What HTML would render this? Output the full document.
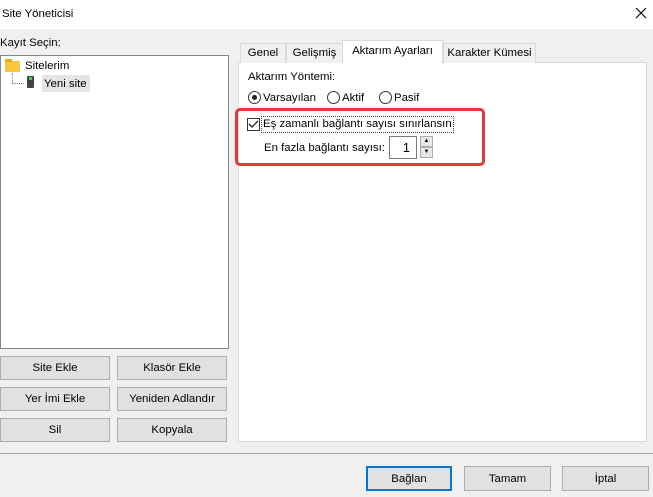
<!DOCTYPE html><html><head><style>
body{margin:0;width:653px;height:497px;background:#f0f0f0;font-family:"Liberation Sans",sans-serif;font-size:11.4px;color:#000;position:relative;overflow:hidden}
.a{position:absolute}
.btn{position:absolute;background:#e1e1e1;border:1px solid #adadad;box-sizing:border-box;text-align:center;font-size:11.4px}
.tab{position:absolute;top:43px;height:20px;border:1px solid #d9d9d9;border-bottom:none;box-sizing:border-box;background:#f0f0f0;line-height:19px;text-align:center}
.rad{position:absolute;top:91px;width:13px;height:13px;border:1px solid #333;border-radius:50%;box-sizing:border-box;background:#fff}
</style></head><body>
<div class="a" style="left:0;top:0;width:653px;height:29px;background:#fff"></div>
<div class="a" style="left:2px;top:8px">Site Yöneticisi</div>
<svg class="a" style="left:635px;top:7px" width="12" height="12"><path d="M1 1L11 11M11 1L1 11" stroke="#000" stroke-width="1.1"/></svg>
<div class="a" style="left:0;top:37px">Kayıt Seçin:</div>
<div class="a" style="left:0;top:55px;width:229px;height:294px;background:#fff;border:1px solid #828790;box-sizing:border-box"></div>
<div class="a" style="left:5px;top:61px;width:15px;height:11px;background:#f8c640;border-radius:1px"></div>
<div class="a" style="left:5px;top:59px;width:7px;height:3px;background:#e8a820"></div>
<div class="a" style="left:25px;top:60px">Sitelerim</div>
<div class="a" style="left:12px;top:73px;height:10px;border-left:1px dotted #888"></div>
<div class="a" style="left:12px;top:83px;width:12px;border-top:1px dotted #888"></div>
<div class="a" style="left:27px;top:76px;width:7px;height:12px;background:#444;border-radius:1px"></div>
<div class="a" style="left:29px;top:77px;width:3px;height:3px;background:#4c4"></div>
<div class="a" style="left:42px;top:75px;width:48px;height:17px;background:#e5e5e5"></div>
<div class="a" style="left:44px;top:78px">Yeni site</div>
<div class="btn" style="left:0;top:356px;width:110px;height:24px;line-height:23px">Site Ekle</div>
<div class="btn" style="left:117px;top:356px;width:110px;height:24px;line-height:23px">Klasör Ekle</div>
<div class="btn" style="left:0;top:387px;width:110px;height:24px;line-height:23px">Yer İmi Ekle</div>
<div class="btn" style="left:117px;top:387px;width:110px;height:24px;line-height:23px">Yeniden Adlandır</div>
<div class="btn" style="left:0;top:418px;width:110px;height:24px;line-height:23px">Sil</div>
<div class="btn" style="left:117px;top:418px;width:110px;height:24px;line-height:23px">Kopyala</div>
<div class="a" style="left:238px;top:62px;width:409px;height:380px;background:#fff;border:1px solid #d9d9d9;box-sizing:border-box"></div>
<div class="tab" style="left:240px;width:46px">Genel</div>
<div class="tab" style="left:286px;width:57px">Gelişmiş</div>
<div class="tab" style="left:443px;width:93px">Karakter Kümesi</div>
<div class="tab" style="left:342px;top:40px;height:24px;width:101px;background:#fff;line-height:21px">Aktarım Ayarları</div>
<div class="a" style="left:248px;top:71px">Aktarım Yöntemi:</div>
<div class="rad" style="left:248px"><span class="a" style="left:3px;top:3px;width:5px;height:5px;border-radius:50%;background:#222"></span></div>
<div class="a" style="left:263px;top:92px">Varsayılan</div>
<div class="rad" style="left:327px"></div>
<div class="a" style="left:342px;top:92px">Aktif</div>
<div class="rad" style="left:379px"></div>
<div class="a" style="left:394px;top:92px">Pasif</div>
<div class="a" style="left:235px;top:108px;width:250px;height:58px;border:3px solid #e8353b;border-radius:5px;box-sizing:border-box"></div>
<div class="a" style="left:247px;top:118px;width:13px;height:13px;border:1px solid #333;box-sizing:border-box;background:#fff"></div>
<svg class="a" style="left:248px;top:119px" width="11" height="11"><path d="M1 5L4 8L10 2" stroke="#222" stroke-width="1.3" fill="none"/></svg>
<div class="a" style="left:261px;top:116px;border:1px dotted #444;padding:0 1px;line-height:15px">Eş zamanlı bağlantı sayısı sınırlansın</div>
<div class="a" style="left:264px;top:142px">En fazla bağlantı sayısı:</div>
<div class="a" style="left:389px;top:136px;width:28px;height:23px;border:1px solid #7a7a7a;background:#fff;box-sizing:border-box;text-align:right;padding-right:6px;line-height:21px;font-size:13px">1</div>
<div class="a" style="left:420px;top:136px;width:13px;height:11px;border:1px solid #adadad;box-sizing:border-box;background:#e8e8e8;font-size:6px;text-align:center;line-height:9px">▲</div>
<div class="a" style="left:420px;top:147px;width:13px;height:11px;border:1px solid #adadad;box-sizing:border-box;background:#e8e8e8;font-size:6px;text-align:center;line-height:9px">▼</div>
<div class="a" style="left:0;top:453px;width:653px;border-top:1px solid #a0a0a0"></div>
<div class="btn" style="left:366px;top:466px;width:86px;height:25px;line-height:22px;border:2px solid #0078d7">Bağlan</div>
<div class="btn" style="left:464px;top:466px;width:87px;height:25px;line-height:24px">Tamam</div>
<div class="btn" style="left:562px;top:466px;width:87px;height:25px;line-height:24px">İptal</div>
</body></html>
